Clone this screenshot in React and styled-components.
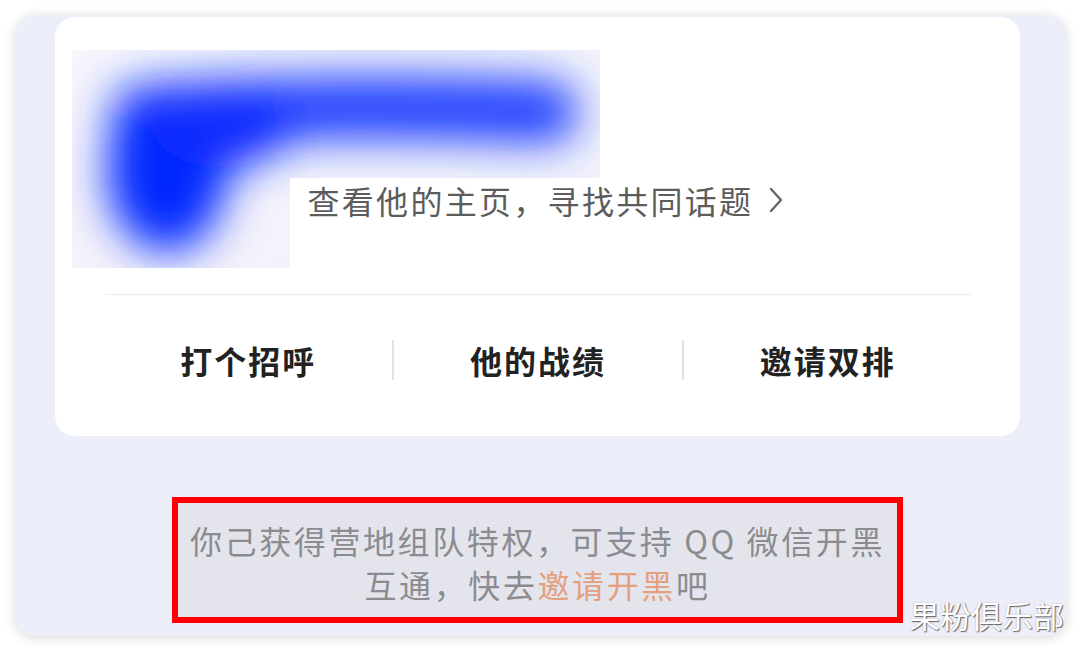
import React from "react";
import styled, { createGlobalStyle } from "styled-components";

const Global = createGlobalStyle`
  html, body { margin: 0; padding: 0; background: #ffffff; }
  body { width: 1080px; height: 650px; overflow: hidden; font-family: "Noto Sans CJK SC", "Noto Sans", sans-serif; }
`;

const Page = styled.div`
  width: 1080px;
  height: 650px;
  padding: 15px 14px 14px 15px;
  box-sizing: border-box;
  position: relative;
`;

const Frame = styled.div`
  height: 621px;
  border-radius: 20px;
  background: #eceefa;
  box-shadow: 0 2px 12px rgba(0, 0, 0, 0.15);
  display: flex;
  flex-direction: column;
  align-items: center;
  padding-top: 2px;
  box-sizing: border-box;
`;

const Card = styled.div`
  width: 965px;
  height: 419px;
  margin-left: -7px;
  background: #ffffff;
  border-radius: 20px;
  box-sizing: border-box;
  padding: 33px 48px 0 17px;
  display: flex;
  flex-direction: column;
`;

const Header = styled.div`
  position: relative;
  height: 218px;
`;

const Blob = styled.svg`
  display: block;
  width: 528px;
  height: 218px;
`;

const ProfileLink = styled.div`
  position: absolute;
  left: 218px;
  top: 128px;
  width: 312px;
  height: 90px;
  background: #ffffff;
  box-sizing: border-box;
  padding: 2px 0 0 18px;
  display: flex;
  align-items: flex-start;
  white-space: nowrap;
  color: #5c5c5c;
  font-size: 32px;
  letter-spacing: 2.3px;
  line-height: 40px;
`;

const Chevron = styled.svg`
  margin-left: 16px;
  margin-top: 7px;
  flex: none;
`;

const Divider = styled.div`
  height: 1px;
  background: #ececef;
  margin: 26px 0 0 33px;
`;

const Actions = styled.div`
  flex: 1;
  display: grid;
  grid-template-columns: 1fr auto 1fr auto 1fr;
  align-items: center;
  margin-left: 33px;
  padding-bottom: 12px;
`;

const Action = styled.div`
  text-align: center;
  font-size: 32px;
  font-weight: 700;
  letter-spacing: 2px;
  color: #222222;
`;

const Sep = styled.div`
  width: 2px;
  height: 40px;
  background: #e2e2e6;
`;

const Notice = styled.div`
  margin-top: 61px;
  margin-left: -6px;
  width: 731px;
  height: 126px;
  box-sizing: border-box;
  border: 6px solid #ff0000;
  background: #e4e5ec;
  padding: 15px 8px 0;
  text-align: center;
  font-size: 32px;
  line-height: 44px;
  letter-spacing: 2.6px;
  white-space: nowrap;
  color: #8b8b90;
`;

const Highlight = styled.span`
  color: #e2a07f;
`;

const Watermark = styled.div`
  position: absolute;
  right: 16px;
  bottom: 18px;
  font-size: 31px;
  line-height: 34px;
  color: #ffffff;
  letter-spacing: 0;
  text-shadow: 1px 1px 1px rgba(60, 60, 60, 0.75), 0 0 2px rgba(0, 0, 0, 0.25);
`;

export default function App() {
  return (
    <>
      <Global />
      <Page>
        <Frame>
          <Card>
            <Header>
              <Blob viewBox="0 0 528 218">
                <defs>
                  <filter id="blur" x="-30%" y="-30%" width="160%" height="160%">
                    <feGaussianBlur stdDeviation="22" />
                  </filter>
                  <linearGradient id="bg" x1="0" y1="0" x2="1" y2="1">
                    <stop offset="0" stopColor="#f6f6fc" />
                    <stop offset="1" stopColor="#f1f1fa" />
                  </linearGradient>
                </defs>
                <rect width="528" height="218" fill="url(#bg)" />
                <g filter="url(#blur)">
                  <path d="M 70 66 Q 250 52 475 62" stroke="#1a3cff" strokeWidth="62" strokeLinecap="round" fill="none" />
                  <ellipse cx="95" cy="120" rx="60" ry="82" fill="#0628ff" />
                  <ellipse cx="150" cy="75" rx="70" ry="42" fill="#0a2cff" />
                </g>
              </Blob>
              <ProfileLink>
                查看他的主页，寻找共同话题
                <Chevron width="14" height="26" viewBox="0 0 14 26">
                  <path d="M2 2 L12 13 L2 24" stroke="#666" strokeWidth="2.4" fill="none" strokeLinecap="round" strokeLinejoin="round" />
                </Chevron>
              </ProfileLink>
            </Header>
            <Divider />
            <Actions>
              <Action>打个招呼</Action>
              <Sep />
              <Action>他的战绩</Action>
              <Sep />
              <Action>邀请双排</Action>
            </Actions>
          </Card>
          <Notice>
            你己获得营地组队特权，可支持 QQ 微信开黑
            <br />
            互通，快去<Highlight>邀请开黑</Highlight>吧
          </Notice>
        </Frame>
        <Watermark>果粉俱乐部</Watermark>
      </Page>
    </>
  );
}
